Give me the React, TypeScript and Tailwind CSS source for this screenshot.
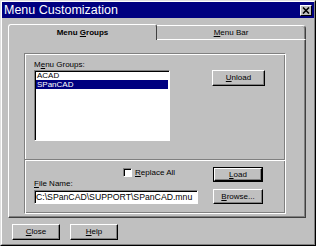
import React from "react";

const font = { fontFamily: '"Liberation Sans", Arial, sans-serif' };

function Btn({ children, w, h = 16, def = false }: { children: React.ReactNode; w: number; h?: number; def?: boolean }) {
  const inner = (
    <div
      className="flex items-center justify-center bg-[#c0c0c0] border border-t-white border-l-white border-r-black border-b-black shadow-[inset_-1px_-1px_0_#808080] text-[8px] text-black leading-none"
      style={{ width: def ? w - 2 : w, height: def ? h - 2 : h }}
    >
      {children}
    </div>
  );
  if (def) return <div className="border border-black" style={{ width: w, height: h }}>{inner}</div>;
  return inner;
}

export default function App() {
  return (
    <div className="w-[316px] h-[246px] bg-[#c0c0c0] border border-t-[#dfdfdf] border-l-[#dfdfdf] border-r-black border-b-black" style={font}>
      <div className="w-full h-full border border-t-white border-l-white border-r-[#808080] border-b-[#808080] flex flex-col">
        {/* Title bar */}
        <div className="h-[16px] bg-[#000080] flex items-center justify-between pl-[2px] pr-[2px]">
          <span className="text-white text-[12.5px] leading-none">Menu Customization</span>
          <div className="w-[12px] h-[11px] bg-[#c0c0c0] border border-t-white border-l-white border-r-black border-b-black flex items-center justify-center">
            <svg width="8" height="7" viewBox="0 0 8 7">
              <path d="M1 0.5 L7 6.5 M7 0.5 L1 6.5" stroke="black" strokeWidth="1.6" />
            </svg>
          </div>
        </div>

        {/* Tabs */}
        <div className="ml-[6px] mt-[5px] w-[298px]">
          <div className="flex items-end h-[16px]">
            <div className="relative z-10 w-[149px] h-[16px] -mb-px bg-[#c0c0c0] border-t border-l border-t-white border-l-white border-r border-r-[#404040] rounded-t-[3px] flex items-center justify-center">
              <span className="text-[8px] font-bold leading-none">
                Menu <span className="underline">G</span>roups
              </span>
            </div>
            <div className="w-[149px] h-[14px] bg-[#c0c0c0] border-t border-t-white border-r border-r-[#404040] shadow-[inset_-1px_0_0_#808080] rounded-tr-[4px] flex items-center justify-center">
              <span className="text-[8px] leading-none">
                <span className="underline">M</span>enu Bar
              </span>
            </div>
          </div>
          <div className="h-[179px] border border-t-white border-l-white border-r-[#404040] border-b-[#404040] shadow-[inset_-1px_-1px_0_#808080] pl-[15px] pt-[13px]">
            {/* Group box */}
            <div className="w-[262px] h-[161px] border border-t-[#808080] border-l-[#808080] border-r-white border-b-white shadow-[inset_1px_1px_0_#fff,inset_-1px_-1px_0_#808080] flex flex-col">
              {/* upper */}
              <div className="h-[105px] flex pl-[9px] pt-[6px]">
                <div className="flex flex-col">
                  <div className="h-[10px] text-[8px] leading-[10px]">
                    M<span className="underline">e</span>nu Groups:
                  </div>
                  <div className="w-[136px] h-[71px] bg-white border border-t-[#808080] border-l-[#808080] border-r-white border-b-white shadow-[inset_1px_1px_0_#000] pt-[1px] pl-[1px] pr-[1px]">
                    <div className="h-[8px] pl-[1px] text-[8px] leading-[8px] text-black">ACAD</div>
                    <div className="h-[9px] pl-[1px] text-[8px] leading-[9px] text-white bg-[#000080]">SPanCAD</div>
                  </div>
                </div>
                <div className="ml-[42px] mt-[10px]">
                  <Btn w={53}>
                    <span className="underline">U</span>nload
                  </Btn>
                </div>
              </div>
              {/* separator */}
              <div className="h-[2px] border-t border-t-[#808080] border-b border-b-white" />
              {/* lower */}
              <div className="flex pl-[9px]">
                <div className="w-[164px] flex flex-col pt-[7px]">
                  <div className="h-[9px] flex items-center pl-[89px]">
                    <div className="w-[9px] h-[9px] bg-white border border-t-[#808080] border-l-[#808080] border-r-white border-b-white shadow-[inset_1px_1px_0_#000]" />
                    <span className="ml-[3px] text-[8px] leading-none">
                      <span className="underline">R</span>eplace All
                    </span>
                  </div>
                  <div className="h-[13px] flex items-center text-[8px] leading-none">
                    <span>
                      <span className="underline">F</span>ile Name:
                    </span>
                  </div>
                  <div className="w-[164px] h-[14px] bg-white border border-t-[#808080] border-l-[#808080] border-r-white border-b-white shadow-[inset_1px_1px_0_#000] flex items-center pl-[1px] overflow-hidden">
                    <span className="text-[8.7px] leading-none whitespace-nowrap">C:\SPanCAD\SUPPORT\SPanCAD.mnu</span>
                  </div>
                </div>
                <div className="ml-[15px] pt-[6px] flex flex-col gap-[7px]">
                  <Btn w={50} h={15} def>
                    <span className="underline">L</span>oad
                  </Btn>
                  <Btn w={50} h={15}>
                    <span className="underline">B</span>rowse...
                  </Btn>
                </div>
              </div>
            </div>
          </div>
        </div>

        {/* Bottom buttons */}
        <div className="flex ml-[10px] mt-[6px] gap-[10px]">
          <Btn w={48}>
            <span className="underline">C</span>lose
          </Btn>
          <Btn w={48}>
            <span className="underline">H</span>elp
          </Btn>
        </div>
      </div>
    </div>
  );
}
